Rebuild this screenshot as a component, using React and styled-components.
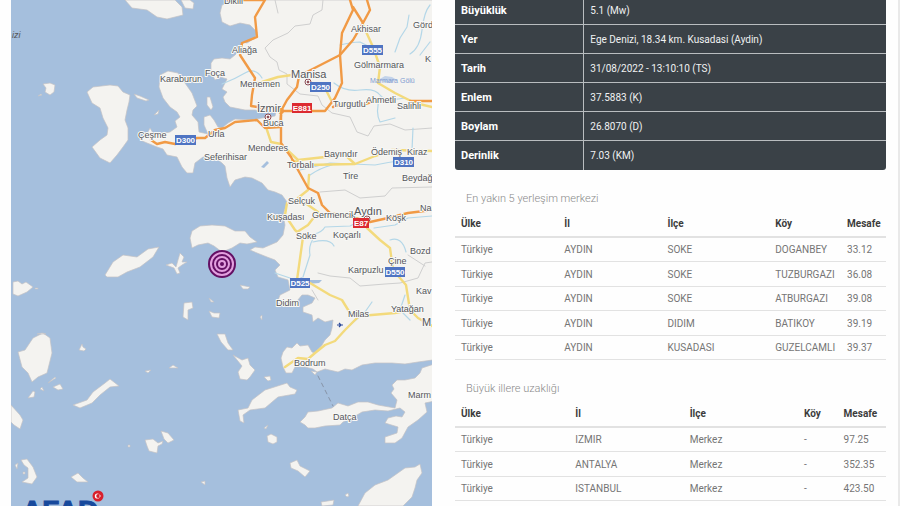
import React from 'react';
import styled, {createGlobalStyle} from 'styled-components';

const GlobalStyle = createGlobalStyle`
  * {
    box-sizing: border-box;
  }
  body {
    margin: 0;
    background: #fefefe;
    font-family: Roboto, "Open Sans", sans-serif;
    font-size: 10px;
    overflow: hidden;
  }
`;

const details = [
  ['Büyüklük', '5.1 (Mw)'],
  ['Yer', 'Ege Denizi, 18.34 km. Kusadasi (Aydin)'],
  ['Tarih', '31/08/2022 - 13:10:10 (TS)'],
  ['Enlem', '37.5883 (K)'],
  ['Boylam', '26.8070 (D)'],
  ['Derinlik', '7.03 (KM)'],
];

const headings = ['Ülke', 'İl', 'İlçe', 'Köy', 'Mesafe'];

const nearest = [
  ['Türkiye', 'AYDIN', 'SOKE', 'DOGANBEY', '33.12'],
  ['Türkiye', 'AYDIN', 'SOKE', 'TUZBURGAZI', '36.08'],
  ['Türkiye', 'AYDIN', 'SOKE', 'ATBURGAZI', '39.08'],
  ['Türkiye', 'AYDIN', 'DIDIM', 'BATIKOY', '39.19'],
  ['Türkiye', 'AYDIN', 'KUSADASI', 'GUZELCAMLI', '39.37'],
];

const cities = [
  ['Türkiye', 'IZMIR', 'Merkez', '-', '97.25'],
  ['Türkiye', 'ANTALYA', 'Merkez', '-', '352.35'],
  ['Türkiye', 'ISTANBUL', 'Merkez', '-', '423.50'],
];

const land = [
  // mainland
  'M235 0L222 5 220 13 222 22 230 26 240 23 250 25 257 32 255 38 247 43 242 42 240 50 235 55 230 59 222 58 214 59 211 63 211 72 215 80 220 77 227 79 222 89 227 92 223 97 225 102 230 107 245 110 255 110 263 112 270 111 276 112 275 116 262 118 252 120 235 119 228 123 222 128 218 127 214 120 210 115 204 117 204 125 208 134 199 132 198 122 192 115 193 110 197 106 192 93 185 83 178 73 168 71 160 75 159 87 163 98 170 107 177 112 180 117 175 121 177 127 170 132 160 134 153 133 150 128 147 134 140 140 147 143 157 147 163 149 167 155 177 157 182 167 187 173 193 173 195 163 203 157 213 156 218 160 222 163 225 166 227 178 230 187 235 180 245 177 252 178 262 183 268 190 275 192 282 195 287 202 283 215 285 225 283 235 277 242 270 245 263 248 255 247 250 250 257 253 267 257 275 260 280 265 275 270 278 277 288 280 290 290 280 295 277 303 288 307 297 301 302 295 308 295 315 298 312 303 303 307 303 312 312 315 313 322 318 318 325 322 333 320 332 328 330 335 325 340 322 345 315 353 312 352 308 345 300 346 297 343 292 348 287 347 283 352 281 358 283 367 286 373 292 373 295 367 305 367 313 369 317 372 325 369 338 372 345 369 352 370 362 365 375 363 392 363 405 364 418 362 440 359V0Z',
  // marmaris and datca
  'M440 362L422 368 420 373 415 378 405 380 397 380 392 385 394 389 391 393 397 400 395 408 378 405 368 402 358 402 348 406 338 403 332 408 318 411 308 412 305 417 300 422 305 425 308 428 315 428 325 426 340 425 343 422 352 418 362 412 375 410 388 411 400 408 405 412 402 417 396 416 388 418 385 423 398 427 397 433 385 437 385 443 395 443 402 438 408 427 418 420 427 412 425 403 440 400Z',
  // rhodes
  'M358 506L365 493 375 485 388 480 405 468 415 467 420 464 422 473 417 480 415 488 412 497 403 506Z',
  // chios
  'M87 92L93 87 110 85 118 86 123 92 130 95 129 102 127 110 125 120 128 128 128 140 123 147 117 155 110 163 100 158 92 147 100 140 107 135 108 128 103 118 100 108 92 103Z',
  // lesbos
  'M125 0L132 8 147 10 157 17 167 19 183 15 182 7 175 0ZM181 0L185 8 193 9 194 3 190 0Z',
  // samos
  'M190 238L192 231 200 226 212 225 225 226 235 231 245 231 250 237 257 242 247 244 240 243 232 248 222 252 214 246 208 243 198 245 192 248Z',
  // ikaria and fournoi
  'M105 275L113 262 123 255 137 257 148 249 159 247 153 257 140 267 127 272 118 277 107 277Z',
  'M166 265L172 263 176 267 180 253 184 257 182 262 187 262 182 265 178 268 180 273 177 274 174 268Z',
  // naxos
  'M18 352L25 350 33 338 43 333 50 338 52 353 47 373 38 377 32 382 28 373 22 367Z',
  // amorgos
  'M73 405L87 400 93 392 105 383 110 379 119 386 110 387 100 395 92 403 80 408Z',
  // kos
  'M238 410L248 408 252 400 265 390 287 383 290 387 297 390 295 394 278 397 265 408 250 410 243 415 244 423 240 421Z',
  // kalymnos
  'M233 355L242 360 248 358 250 365 255 370 250 377 247 380 240 379 238 372 242 366Z',
  'M217 334L225 334 228 343 233 350 228 350 221 342Z',
  // astypalaia
  'M145 440L153 439 158 443 163 441 162 444 158 446 157 453 149 451 147 446ZM161 431L168 433 174 440 168 443 164 439Z',
  // santorini
  'M21 460L27 459 33 467 37 477 32 484 22 482 28 478 28 468 24 465ZM15 465L18 463 17 469ZM23 472h2v2h-2Z',
  'M290 463L297 460 300 466 310 471 305 477 298 471 291 468Z',
  'M267 436L271 434 277 437 277 442 273 444 268 442ZM264 428L268 425 266 429Z',
  'M43 84L50 83 55 85 54 92 50 95 45 92 46 88ZM38 96L41 94 42 95Z',
  'M134 94L140 96 149 100 146 101 137 98ZM154 115L159 110 158 114ZM207 97L210 97 213 107 211 110 207 105Z',
  'M13 282L18 281 22 284 26 282 33 287 27 292 18 296 13 294ZM35 288h3v1h-3Z',
  'M184 303L192 302 193 308 188 310 188 320 183 317ZM209 298L214 302 211 302ZM209 311L214 313 220 313 219 318 212 317Z',
  'M240 285L250 287 248 289 243 289ZM260 317L262 315 262 320Z',
  'M79 350L82 344 83 347 86 349 84 351ZM28 398L33 391 35 392 34 397ZM40 389L42 387 44 391ZM53 387L60 384 63 389 58 390ZM48 383L55 377 56 378Z',
  'M11 405L20 415 23 420 20 429 14 425 11 422ZM37 334L42 333 46 334Z',
  'M71 477L78 473 83 478 88 482 77 482ZM145 371L151 370 148 373ZM169 368L173 365 178 368ZM201 482L205 481 205 485ZM128 445h2v2h-2Z',
  'M264 377L270 376 271 380 268 381ZM321 502L334 500 333 505 322 506ZM345 495L348 493 349 496 347 497ZM311 371L317 372 315 375Z',
];

const lakes = [
  'M300 277L310 280 322 280 319 283 308 284Z',
  'M261 167L267 161 269 163 264 168Z',
];

const rivers = [
  'M222 84Q235 79 245 73T262 78',
  'M430 5Q424 12 422 30T410 54',
  'M409 15L407 27 400 38 395 52M340 45Q352 42 360 42L380 52',
  'M334 83Q345 92 360 90T380 95 405 98',
  'M380 97Q375 112 380 122L395 118M413 128L412 150M405 160Q390 162 375 165L330 163 300 170',
  'M315 234Q322 232 325 227L350 226 358 222M315 236Q308 245 310 255L303 277M313 242Q330 238 334 246',
  'M374 228L395 225 408 218 432 216M390 240Q402 236 406 252M405 295L400 310 410 320M350 325L365 312 372 302',
  'M310 175Q320 168 332 165M275 273L290 278M420 55L430 42',
];

const borders = [
  'M275 0L278 13M323 0L322 10 313 15 310 24 295 26 288 33 273 40 265 48 270 57 277 62 279 70 287 74 287 84 300 94 318 96 322 105 332 113 350 117 357 132 368 136 374 126 390 124 405 130 432 128',
  'M320 192L345 190 360 198 385 196 392 188 432 187',
  'M318 273L330 276 350 278 360 286 385 284 400 283 418 278 425 263 432 262M312 290L318 300M408 255L425 266',
];

const yellowRoads = [
  'M247 85L262 82 278 77 292 75M325 88L332 102M363 25L373 47 380 67 378 83 395 93 415 103 432 107',
  'M267 130L271 142 281 144M283 146L298 160 325 157 345 155 355 164 375 156 392 150 432 151M292 160L305 165 355 164',
  'M309 175L308 190 298 198 318 212 308 225 297 232M287 203L285 215 295 230 303 237 297 280',
  'M310 283L330 295 342 300 350 313 360 316 395 313 410 310M367 228L380 240 390 248 393 270 406 285 410 310 418 318 432 326',
  'M358 317L345 330 335 341 325 345 315 353 308 359 298 358 285 367',
];

const orangeRoads = [
  'M265 0L255 17 257 37 242 43 240 55 255 78 252 95 251 106 265 108M228 0L263 0',
  'M281 111L325 111 335 98 342 83 340 55 342 33 353 10 350 0',
  'M281 111L287 100 297 87 299 76 340 55 353 40 363 23 353 7M363 23L370 10 367 0',
  'M281 111L281 143 291 157 298 170 308 188 318 193 322 205 330 213 355 218 370 222 388 218 408 213 432 210',
  'M281 115L280 127 265 128 257 120 235 122 225 128 215 130 205 138 197 138 175 144 165 142 157 144 151 140',
  'M333 107L345 103 365 104 375 101M410 101L432 101',
];

const places = [
  {x: 224, y: 4, name: 'Dikili'},
  {x: 232, y: 53, name: 'Aliağa'},
  {x: 205, y: 76, name: 'Foça'},
  {x: 160, y: 82, name: 'Karaburun'},
  {x: 240, y: 87, name: 'Menemen'},
  {x: 351, y: 32, name: 'Akhisar'},
  {x: 413, y: 28, name: 'Görd'},
  {x: 425, y: 62, name: 'K'},
  {x: 354, y: 68, name: 'Gölmarmara'},
  {x: 291, y: 78, name: 'Manisa', big: true},
  {x: 257, y: 112, name: 'İzmir', big: true},
  {x: 263, y: 126, name: 'Buca'},
  {x: 333, y: 107, name: 'Turgutlu'},
  {x: 366, y: 103, name: 'Ahmetli'},
  {x: 397, y: 109, name: 'Salihli'},
  {x: 138, y: 138, name: 'Çeşme'},
  {x: 208, y: 137, name: 'Urla'},
  {x: 204, y: 160, name: 'Seferihisar'},
  {x: 248, y: 151, name: 'Menderes'},
  {x: 324, y: 157, name: 'Bayındır'},
  {x: 371, y: 155, name: 'Ödemiş'},
  {x: 407, y: 155, name: 'Kiraz'},
  {x: 287, y: 168, name: 'Torbalı'},
  {x: 343, y: 179, name: 'Tire'},
  {x: 402, y: 181, name: 'Beydağ'},
  {x: 288, y: 204, name: 'Selçuk'},
  {x: 267, y: 220, name: 'Kuşadası'},
  {x: 312, y: 218, name: 'Germencik'},
  {x: 354, y: 215, name: 'Aydın', big: true},
  {x: 386, y: 221, name: 'Köşk'},
  {x: 420, y: 211, name: 'Na'},
  {x: 296, y: 239, name: 'Söke'},
  {x: 333, y: 238, name: 'Koçarlı'},
  {x: 410, y: 254, name: 'Bozd'},
  {x: 388, y: 264, name: 'Çine'},
  {x: 348, y: 273, name: 'Karpuzlu'},
  {x: 416, y: 294, name: 'Kav'},
  {x: 276, y: 306, name: 'Didim'},
  {x: 348, y: 317, name: 'Milas'},
  {x: 391, y: 312, name: 'Yatağan'},
  {x: 422, y: 326, name: 'M', big: true},
  {x: 294, y: 366, name: 'Bodrum'},
  {x: 333, y: 420, name: 'Datça'},
  {x: 408, y: 398, name: 'Marm'},
];

const shields = [
  {x: 175, y: 135, w: 21, code: 'D300'},
  {x: 310, y: 82, w: 21, code: 'D250'},
  {x: 362, y: 45, w: 21, code: 'D555'},
  {x: 393, y: 157, w: 21, code: 'D310'},
  {x: 292, y: 103, w: 20, code: 'E881', red: true},
  {x: 353, y: 218, w: 16, code: 'E87', red: true},
  {x: 385, y: 267, w: 20, code: 'D550'},
  {x: 290, y: 278, w: 20, code: 'D525'},
];

function Shield({x, y, w, code, red}) {
  return (
    <g>
      <rect x={x} y={y} width={w} height="10" fill={red ? '#dc2a30' : '#4f74c2'} />
      <ShieldText x={x + w / 2} y={y + 8}>{code}</ShieldText>
    </g>
  );
}

function CityDot({x, y}) {
  return (
    <g fill="none" stroke="#8a4a52">
      <circle cx={x} cy={y} r="3" fill="#fff" />
      <circle cx={x} cy={y} r="1" fill="#8a2a35" />
    </g>
  );
}

function Map() {
  return (
    <MapSvg viewBox="11 0 421 506" role="img" aria-label="Ege Denizi">
      <rect x="11" y="0" width="421" height="506" fill="#a5bfdd" />
      <g fill="#f4f3f0" stroke="#c3c2c4" strokeWidth="0.7" strokeLinejoin="round">
        {land.map(d => <path key={d} d={d} />)}
      </g>
      <g fill="#a5bfdd">
        {lakes.map(d => <path key={d} d={d} />)}
      </g>
      <path d="M378 80L385 76 392 77 397 80 388 83Z" fill="#c3d3ea" />
      <g fill="none" strokeLinejoin="round" strokeLinecap="round">
        <g stroke="#cfcfcf">
          {borders.map(d => <path key={d} d={d} />)}
        </g>
        <g stroke="#b4d7e8" strokeWidth="1.2">
          {rivers.map(d => <path key={d} d={d} />)}
        </g>
        <g stroke="#f3da7c" strokeWidth="2.4">
          {yellowRoads.map(d => <path key={d} d={d} />)}
        </g>
        <g stroke="#f19a45" strokeWidth="2.4">
          {orangeRoads.map(d => <path key={d} d={d} />)}
        </g>
        <path d="M318 376L333 406" stroke="#8794a8" strokeDasharray="4 4" />
      </g>
      <circle cx="281" cy="111" r="3" fill="#f19a45" />
      <CityDot x={308} y={82} />
      <CityDot x={268} y={117} />
      <CityDot x={367} y={219} />
      {places.map(p => (
        <Place key={p.name} x={p.x} y={p.y} $big={p.big}>{p.name}</Place>
      ))}
      {shields.map(s => <Shield key={s.code} {...s} />)}
      <LakeName x="370" y="83">Marmara Gölü</LakeName>
      <SeaName x="12" y="38">izi</SeaName>
      <path d="M337 325h6M339 323l2 2-2 2" stroke="#2c4a9a" strokeWidth="1.2" fill="none" />
      <g fill="none" stroke="#641064" strokeWidth="2">
        <circle cx="222" cy="264" r="13" fill="#e3a0df" />
        <circle cx="222" cy="264" r="9" />
        <circle cx="222" cy="264" r="5" />
        <circle cx="222" cy="264" r="1" />
      </g>
      <LogoText x="22" y="520">AFAD</LogoText>
      <circle cx="98" cy="496" r="5.5" fill="#d8202c" />
      <circle cx="97.4" cy="496" r="2.6" fill="#fff" />
      <circle cx="98.2" cy="496" r="2" fill="#d8202c" />
      <circle cx="100" cy="496" r="0.8" fill="#fff" />
    </MapSvg>
  );
}

function DistanceTable({title, rows, widths}) {
  return (
    <Distances>
      <caption>{title}</caption>
      <colgroup>
        {widths.map((w, i) => <Col key={i} $width={w} />)}
      </colgroup>
      <thead>
        <tr>{headings.map(h => <th key={h} scope="col">{h}</th>)}</tr>
      </thead>
      <tbody>
        {rows.map(row => (
          <tr key={row[4]}>{row.map((cell, i) => <td key={i}>{cell}</td>)}</tr>
        ))}
      </tbody>
    </Distances>
  );
}

export default function App() {
  return (
    <Page>
      <GlobalStyle />
      <Map />
      <Info>
        <Details>
          <tbody>
            {details.map(([label, value]) => (
              <tr key={label}>
                <th scope="row">{label}</th>
                <td>{value}</td>
              </tr>
            ))}
          </tbody>
        </Details>
        <DistanceTable title="En yakın 5 yerleşim merkezi" rows={nearest} widths={[23, 23, 24, 16, 10]} />
        <DistanceTable title="Büyük illere uzaklığı" rows={cities} widths={[26, 26, 26, 9, 11]} />
      </Info>
    </Page>
  );
}

const Page = styled.main`
  display: grid;
  grid-template-columns: minmax(0, 421fr) minmax(0, 431fr);
  gap: 23px;
  min-height: 100vh;
  padding: 0 12px 0 11px;
  border-right: 2px solid #e9e9e9;
  overflow: hidden;
`;

const MapSvg = styled.svg`
  display: block;
  width: 100%;
  font-family: "Liberation Sans", Arial, sans-serif;
`;

const Place = styled.text`
  font-size: ${props => props.$big ? '11px' : '9px'};
  fill: #55565a;
  stroke: #f8f8f6;
  stroke-width: 2px;
  stroke-linejoin: round;
  paint-order: stroke;
`;

const LakeName = styled.text`
  font-size: 7px;
  fill: #7f9cd0;
`;

const SeaName = styled.text`
  font-size: 9px;
  font-style: italic;
  fill: #55565a;
`;

const ShieldText = styled.text`
  font-size: 8px;
  font-weight: bold;
  fill: #fff;
  text-anchor: middle;
`;

const LogoText = styled.text`
  font-size: 28px;
  font-weight: bold;
  fill: #17499c;
  stroke: #17499c;
  stroke-width: 1px;
`;

const Info = styled.section`
  display: flex;
  flex-direction: column;
  margin-top: -4px;
`;

const Details = styled.table`
  width: 100%;
  table-layout: fixed;
  border-spacing: 0;
  border-radius: 0 0 3px 3px;
  overflow: hidden;
  background: #3a4147;
  color: #f0f1f2;
  th, td {
    height: 29px;
    padding: 0 6px;
    border-bottom: 1px solid #b9bdc0;
    text-align: left;
    vertical-align: middle;
  }
  th {
    width: 30%;
    border-right: 1px solid #b9bdc0;
    color: #fff;
    font-size: 11px;
  }
  tr:last-child th, tr:last-child td {
    border-bottom: 0;
  }
`;

const Distances = styled.table`
  width: 100%;
  margin-top: 17px;
  table-layout: fixed;
  border-spacing: 0;
  color: #757575;
  caption {
    padding: 3px 11px;
    line-height: 18px;
    text-align: left;
    font-size: 11px;
    font-weight: 300;
    color: #8a8a8a;
  }
  th, td {
    height: 24px;
    padding: 0 6px;
    border-bottom: 1px solid #e2e2e2;
    text-align: left;
    vertical-align: middle;
    white-space: nowrap;
  }
  th {
    height: 27px;
    border-bottom: 2px solid #e2e2e2;
    color: #3c3c3c;
  }
  tbody tr:nth-child(even) td {
    height: 25px;
  }
`;

const Col = styled.col`
  width: ${props => props.$width}%;
`;
